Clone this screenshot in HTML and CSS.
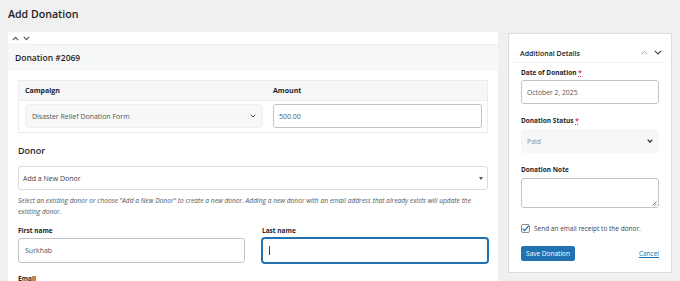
FILE: index.html
```html
<!DOCTYPE html>
<html>
<head>
<meta charset="utf-8">
<link rel="stylesheet" href="styles.css">
</head>
<body>
<div class="page">
  <h1 class="title">Add Donation</h1>
  <div class="columns">
    <div class="main">
      <div class="arrows">
        <svg width="7" height="5" viewBox="0 0 7 5"><path d="M0.8 4.2 L3.5 1.3 L6.2 4.2" fill="none" stroke="#50575e" stroke-width="1.1"/></svg>
        <svg width="7" height="5" viewBox="0 0 7 5"><path d="M0.8 0.8 L3.5 3.7 L6.2 0.8" fill="none" stroke="#50575e" stroke-width="1.1"/></svg>
      </div>
      <div class="main-head">Donation #2069</div>
      <div class="main-body">
        <div class="ctable">
          <div class="crow chead">
            <div class="ccell c1">Campaign</div>
            <div class="ccell c2">Amount</div>
          </div>
          <div class="crow">
            <div class="ccell c1">
              <div class="gselect">
                <span>Disaster Relief Donation Form</span>
                <svg width="6" height="4" viewBox="0 0 6 4"><path d="M0.7 0.7 L3 3 L5.3 0.7" fill="none" stroke="#3c434a" stroke-width="1"/></svg>
              </div>
            </div>
            <div class="ccell c2">
              <div class="input amount">500.00</div>
            </div>
          </div>
        </div>

        <h2 class="section">Donor</h2>
        <div class="dselect">
          <span>Add a New Donor</span>
          <span class="tri"></span>
        </div>
        <p class="desc">Select an existing donor or choose "Add a New Donor" to create a new donor. Adding a new donor with an email address that already exists will update the existing donor.</p>

        <div class="names">
          <div class="field">
            <label class="lbl">First name</label>
            <div class="input big">Surkhab</div>
          </div>
          <div class="field">
            <label class="lbl">Last name</label>
            <div class="input big focus"><span class="caret"></span></div>
          </div>
        </div>
        <label class="lbl email">Email</label>
      </div>
    </div>

    <div class="side">
      <div class="side-head">
        <span>Additional Details</span>
        <span class="side-arrows">
          <svg width="7" height="5" viewBox="0 0 7 5"><path d="M0.8 4.2 L3.5 1.3 L6.2 4.2" fill="none" stroke="#a7aaad" stroke-width="1"/></svg>
          <svg width="8" height="5" viewBox="0 0 8 5"><path d="M0.8 0.8 L4 4 L7.2 0.8" fill="none" stroke="#3c434a" stroke-width="1.1"/></svg>
        </span>
      </div>
      <div class="side-body">
        <label class="lbl">Date of Donation <abbr class="req">*</abbr></label>
        <div class="input side-input">October 2, 2025</div>

        <label class="lbl gap">Donation Status <abbr class="req">*</abbr></label>
        <div class="gselect side-select">
          <span>Paid</span>
          <svg width="6" height="4" viewBox="0 0 6 4"><path d="M0.7 0.7 L3 3.1 L5.3 0.7" fill="none" stroke="#1d2327" stroke-width="1.1"/></svg>
        </div>

        <label class="lbl gap">Donation Note</label>
        <div class="textarea">
          <svg class="grip" width="5" height="5" viewBox="0 0 5 5"><path d="M4.5 0.5 L0.5 4.5 M4.5 2.8 L2.8 4.5" stroke="#50575e" stroke-width="0.8"/></svg>
        </div>

        <div class="check-row">
          <span class="checkbox">
            <svg width="9" height="9" viewBox="0 0 9 9"><path d="M1.6 4.6 L3.6 6.6 L7.6 1.8" fill="none" stroke="#2271b1" stroke-width="1.3"/></svg>
          </span>
          <span class="check-text">Send an email receipt to the donor.</span>
        </div>

        <div class="actions">
          <button class="btn">Save Donation</button>
          <a class="cancel" href="#">Cancel</a>
        </div>
      </div>
    </div>
  </div>
</div>
</body>
</html>
```
FILE: styles.css
```css
* { box-sizing: border-box; }
html, body { margin: 0; padding: 0; }
body {
  background: #f0f0f1;
  font-family: "Open Sans", "Noto Sans", sans-serif;
  color: #1d2327;
  font-size: 7.5px;
  height: 281px;
  overflow: hidden;
}
.page { padding: 0 8px; }
.title {
  margin: 0;
  padding-top: 6px;
  height: 32px;
  font-size: 10.6px;
  font-weight: 600;
  line-height: 16px;
}
.columns {
  display: flex;
  gap: 10px;
  align-items: flex-start;
}
.main {
  width: 490px;
  background: #fff;
  height: 260px;
}
.arrows {
  height: 13px;
  display: flex;
  align-items: center;
  gap: 4px;
  padding-left: 4px;
  border-bottom: 1px solid #f0f0f1;
}
.main-head {
  height: 25px;
  background: #f6f7f7;
  border-bottom: 1px solid #f0f0f1;
  font-size: 8.5px;
  font-weight: 600;
  line-height: 25px;
  padding-left: 7px;
}
.main-body { padding: 10px 10px 0 10px; }
.ctable {
  border: 1px solid #ececec;
}
.crow { display: flex; }
.chead {
  background: #f6f7f7;
  height: 20px;
  border-bottom: 1px solid #ececec;
}
.chead .ccell {
  font-weight: 700;
  line-height: 19px;
  font-size: 7px;
}
.ccell.c1 { width: 248px; padding-left: 6px; }
.ccell.c2 { flex: 1; padding-left: 6px; padding-right: 5px; }
.crow:not(.chead) .ccell { padding-top: 3px; padding-bottom: 4px; }
.crow:not(.chead) .c1 { padding-right: 4px; }
.gselect {
  height: 24px;
  background: #f6f7f7;
  border: 1px solid #f0f0f0;
  border-radius: 3px;
  display: flex;
  align-items: center;
  justify-content: space-between;
  padding: 0 6px 0 6px;
  color: #50575e;
  font-size: 7px;
}
.input {
  height: 24px;
  border: 1px solid #c3c4c7;
  border-radius: 3px;
  display: flex;
  align-items: center;
  padding-left: 6px;
  color: #50575e;
  font-size: 7px;
  background: #fff;
}
.input.amount { padding-left: 5px; }
.section {
  margin: 12px 0 0 0;
  font-size: 9px;
  font-weight: 600;
  line-height: 12px;
  height: 21px;
}
.dselect {
  height: 24px;
  border: 1px solid #dcdcde;
  border-radius: 3px;
  display: flex;
  align-items: center;
  justify-content: space-between;
  padding: 0 4px 0 4px;
  color: #3c434a;
  font-size: 7px;
}
.tri {
  width: 0; height: 0;
  border-left: 2px solid transparent;
  border-right: 2px solid transparent;
  border-top: 3px solid #50575e;
}
.desc {
  margin: 6px 0 0 0;
  font-style: italic;
  font-size: 6.65px;
  line-height: 10.5px;
  color: #50575e;
}
.names {
  display: flex;
  gap: 17px;
  margin-top: 9px;
}
.field { flex: 1; display: flex; flex-direction: column; }
.field:first-child { flex: 0 0 227px; }
.lbl {
  display: block;
  font-weight: 700;
  font-size: 6.5px;
  line-height: 10px;
  color: #1d2327;
}
.field .lbl { margin-bottom: 2px; }
.input.big { height: 25px; font-size: 7px; padding-left: 6px; }
.input.focus {
  border: 1px solid #2271b1;
  box-shadow: 0 0 0 1px #2271b1;
}
.caret {
  width: 1px; height: 9px; background: #3c434a;
}
.email { margin-top: 11px; }

.side {
  width: 164px;
  background: #fff;
  border: 1px solid #dcdcde;
  margin-top: 1px;
  padding-bottom: 11px;
}
.side-head {
  margin: 0 5px 0 5px;
  height: 29px;
  border-bottom: 1px solid #f0f0f1;
  display: flex;
  align-items: flex-end;
  justify-content: space-between;
  padding: 0 4px 4px 6px;
  font-size: 7px;
  font-weight: 600;
}
.side-arrows { display: flex; gap: 6px; align-items: center; padding-bottom: 3px; }
.side-body { padding: 5px 12px 0 12px; }
.req {
  color: #d63638;
  text-decoration: underline dotted;
  font-weight: 700;
}
.side-input {
  margin-top: 2px;
  height: 24px;
  font-size: 6.8px;
  padding-left: 5px;
}
.gap { margin-top: 12px; }
.side-select {
  margin-top: 3px;
  height: 24px;
  border-color: #f6f7f7;
  color: #8c8f94;
  padding-left: 5px;
  padding-right: 5px;
}
.textarea {
  margin-top: 3px;
  height: 30px;
  border: 1px solid #c3c4c7;
  border-radius: 3px;
  position: relative;
}
.grip { position: absolute; right: 1px; bottom: 1px; }
.check-row {
  margin-top: 16px;
  display: flex;
  align-items: center;
  gap: 4px;
}
.checkbox {
  width: 9px; height: 9px;
  border: 1px solid #8c8f94;
  border-radius: 2px;
  display: flex;
  align-items: center;
  justify-content: center;
  position: relative;
}
.checkbox svg { position: absolute; left: -1px; top: -1px; }
.check-text { font-size: 6.5px; color: #3c434a; }
.actions {
  margin-top: 13px;
  display: flex;
  justify-content: space-between;
  align-items: center;
}
.btn {
  height: 15px;
  width: 54px;
  padding: 0;
  background: #2271b1;
  border: 1px solid #2271b1;
  border-radius: 2px;
  color: #fff;
  font-family: inherit;
  font-size: 6.5px;
}
.cancel {
  color: #2271b1;
  font-size: 6.5px;
  text-decoration: underline;
}
```
